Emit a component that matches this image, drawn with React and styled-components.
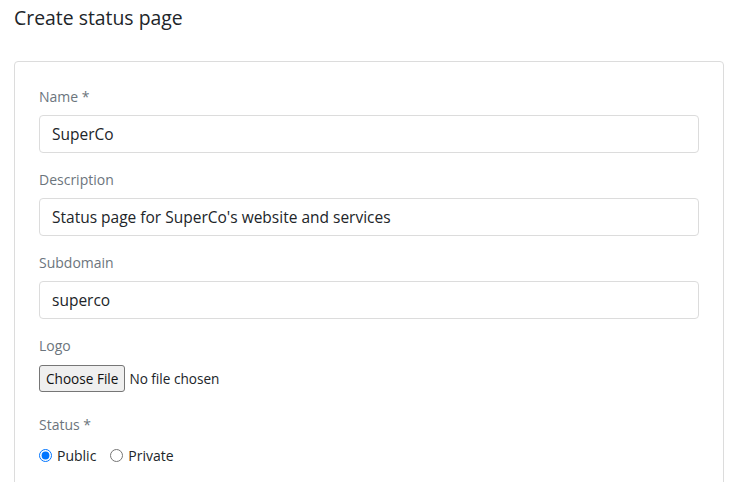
import React from 'react';
import styled, { createGlobalStyle } from 'styled-components';

const GlobalStyle = createGlobalStyle`
  body {
    margin: 0;
    background: #ffffff;
    font-family: "Open Sans", "Noto Sans", sans-serif;
    color: #212529;
  }
`;

const Page = styled.div`
  padding: 4px 22px 0 14px;
`;

const Title = styled.h1`
  margin: 0 0 30px;
  font-size: 19.4px;
  font-weight: 400;
  line-height: 27px;
  color: #212529;
`;

const Card = styled.form`
  border: 1px solid #dcdcdc;
  border-radius: 4px;
  padding: 25px 24px 40px;
  display: flex;
  flex-direction: column;
  gap: 17px;
`;

const Field = styled.div`
  display: flex;
  flex-direction: column;
  gap: ${(p) => p.$gap || 8}px;
  margin-top: ${(p) => p.$top || 0}px;
`;

const Label = styled.label`
  font-size: 14px;
  line-height: 20px;
  color: #6c757d;
`;

const TextInput = styled.input`
  box-sizing: border-box;
  height: 38px;
  width: 100%;
  padding: 0 12px;
  border: 1px solid #dcdcdc;
  border-radius: 4px;
  font-family: inherit;
  font-size: 15.5px;
  color: #212529;
  outline: none;
`;

const FileInput = styled.input`
  font-family: inherit;
  font-size: 13.6px;
  color: #212529;
  height: 27px;

  &::file-selector-button {
    font-family: inherit;
    font-size: 13.6px;
    height: 27px;
    padding: 0 6px;
    margin-right: 4px;
    background: #efefef;
    border: 1px solid #767676;
    border-radius: 3px;
    color: #111;
  }
`;

const RadioRow = styled.div`
  display: flex;
  align-items: center;
  gap: 14px;
`;

const RadioOption = styled.label`
  display: flex;
  align-items: center;
  gap: 5px;
  font-size: 14px;
  color: #212529;

  input {
    margin: 0;
    width: 13px;
    height: 13px;
    accent-color: #0075ff;
  }
`;

export default function App() {
  return (
    <>
      <GlobalStyle />
      <Page>
        <Title>Create status page</Title>
        <Card onSubmit={(e) => e.preventDefault()}>
          <Field>
            <Label>Name *</Label>
            <TextInput defaultValue="SuperCo" />
          </Field>
          <Field>
            <Label>Description</Label>
            <TextInput defaultValue="Status page for SuperCo's website and services" />
          </Field>
          <Field>
            <Label>Subdomain</Label>
            <TextInput defaultValue="superco" />
          </Field>
          <Field $gap={9}>
            <Label>Logo</Label>
            <FileInput type="file" />
          </Field>
          <Field $gap={11} $top={6}>
            <Label>Status *</Label>
            <RadioRow>
              <RadioOption>
                <input type="radio" name="status" defaultChecked />
                Public
              </RadioOption>
              <RadioOption>
                <input type="radio" name="status" />
                Private
              </RadioOption>
            </RadioRow>
          </Field>
        </Card>
      </Page>
    </>
  );
}
